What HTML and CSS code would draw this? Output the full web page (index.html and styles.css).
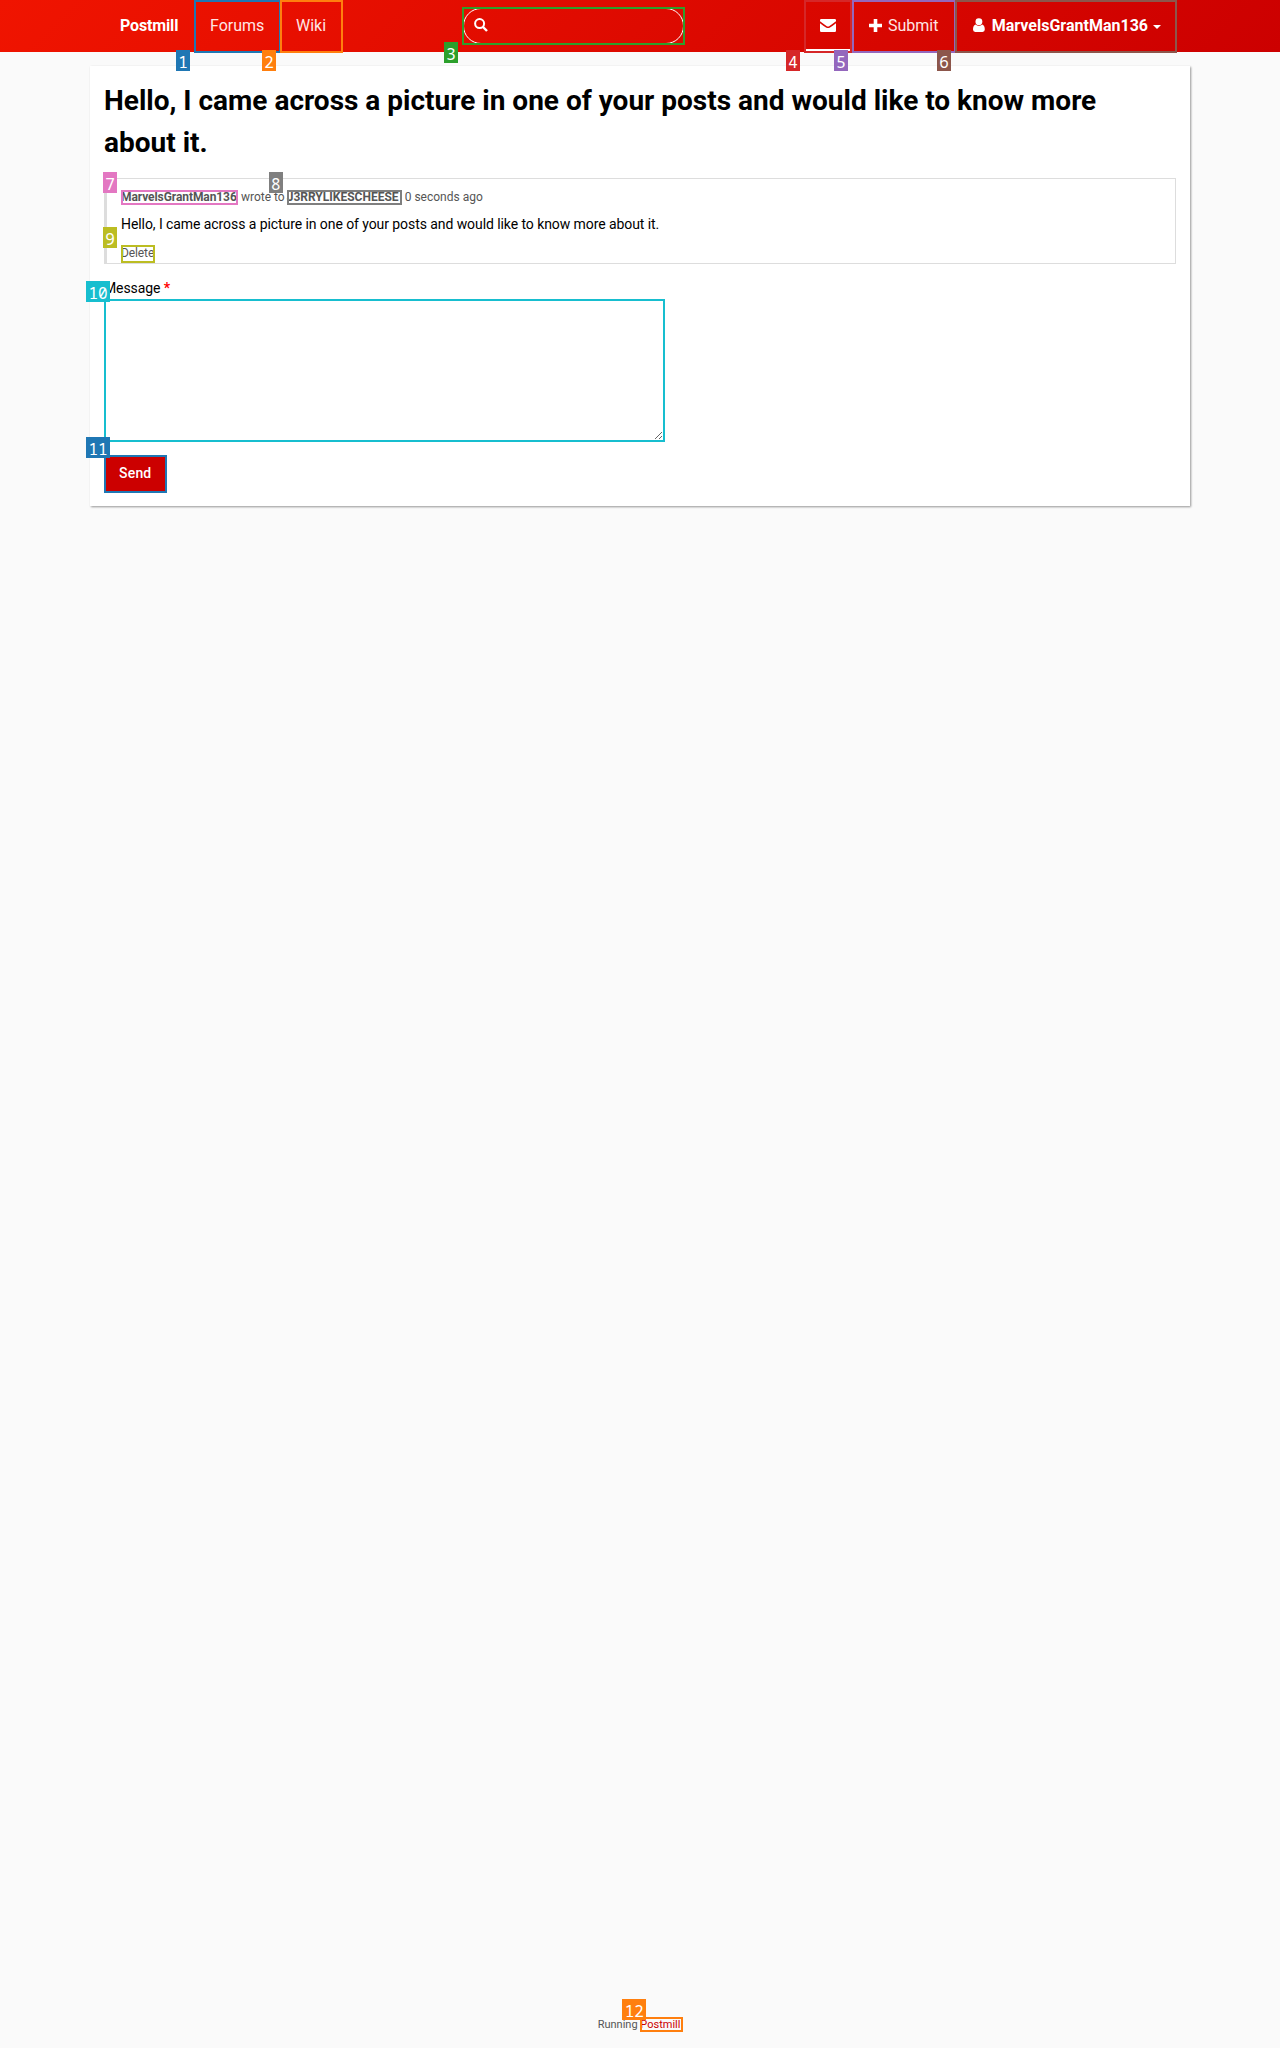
FILE: index.html
```html
<!DOCTYPE html>
<html lang="en">
<head>
<meta charset="utf-8">
<title>Hello, I came across a picture in one of your posts</title>
<link rel="stylesheet" href="styles.css">
</head>
<body>
<header class="site-nav">
  <nav class="nav-inner">
    <a class="nav-item brand">Postmill</a>
    <a class="nav-item mark blue w-forums">Forums<span class="tag below">1</span></a>
    <a class="nav-item mark orange w-wiki">Wiki<span class="tag below">2</span></a>
    <div class="search mark green">
      <div class="search-field"><svg width="14" height="14" viewBox="0 0 14 14"><circle cx="5.6" cy="5.6" r="4.5" fill="none" stroke="#fff" stroke-width="2"/><path d="M9 9l4 4" stroke="#fff" stroke-width="2.4"/></svg></div>
      <span class="tag below">3</span>
    </div>
    <a class="nav-item mail mark red"><svg width="16" height="13" viewBox="0 0 16 13"><path d="M0 1.2Q0 0 1.2 0h13.6Q16 0 16 1.2v1Q12 5.200 9.500 7 8 8 6.500 7 4 5.200 0 2.200zM0 4.200Q3.500 7 6 8.500q2 1 4 0 2.500-1.500 6-4.300v7.600q0 1.200-1.200 1.200H1.200Q0 13 0 11.800z" fill="#fff"/></svg><span class="tag below">4</span></a>
    <a class="nav-item mark purple w-submit"><svg width="13" height="13" viewBox="0 0 13 13"><path d="M6.500 1.500v10M1.500 6.500h10" stroke="#fff" stroke-width="3.600" stroke-linecap="square"/></svg><span class="submit-text">Submit</span><span class="tag below">5</span></a>
    <a class="nav-item user mark brown"><svg width="12" height="14" viewBox="0 0 12 14"><circle cx="6" cy="3.700" r="3.500" fill="#fff"/><path d="M2.500 6.500Q6 9.500 9.500 6.500 12 7.500 12 11.500 12 14 9.700 14H2.300Q0 14 0 11.500 0 7.500 2.500 6.500z" fill="#fff"/></svg><b class="username">MarvelsGrantMan136</b><i class="caret"></i><span class="tag below">6</span></a>
  </nav>
</header>
<main class="card">
  <h1 class="title">Hello, I came across a picture in one of your posts and would like to know more about it.</h1>
  <article class="message">
    <p class="meta"><span class="inline-mark pink w-from"><b>MarvelsGrantMan136</b><span class="tag">7</span></span> wrote to <span class="inline-mark gray w-to"><b>J3RRYLIKESCHEESE</b><span class="tag">8</span></span> 0 seconds ago</p>
    <p class="text">Hello, I came across a picture in one of your posts and would like to know more about it.</p>
    <p class="actions"><span class="inline-mark olive delete">Delete<span class="tag">9</span></span></p>
  </article>
  <form class="reply">
    <label class="label" for="body">Message <b class="required">*</b></label>
    <div class="field mark cyan"><textarea id="body" class="body"></textarea><span class="tag">10</span></div>
    <div class="send mark blue">Send<span class="tag">11</span></div>
  </form>
</main>
<footer class="footer">Running <span class="inline-mark orange footer-link">Postmill<span class="tag">12</span></span></footer>
</body>
</html>
```
FILE: styles.css
```css
* { box-sizing: border-box; }
body {
  margin: 0;
  height: 2048px;
  display: flex;
  flex-direction: column;
  background: #fafafa;
  font: 14px/21px Roboto, sans-serif;
  color: #000;
}
p, h1 { margin: 0; }
.site-nav {
  height: 52px;
  background: linear-gradient(135deg, #f01400, #c00);
}
.nav-inner {
  width: 1072px;
  height: 53px;
  margin: 0 auto;
  display: flex;
}
.nav-inner > * { flex-shrink: 0; }
.nav-item {
  height: 53px;
  padding: 0 16px 3px;
  display: flex;
  align-items: center;
  font-size: 16px;
  color: #ffe5e5;
}
.brand { width: 90px; font-weight: 700; color: #fff; letter-spacing: -.15px; }
.w-forums { width: 87px; }
.w-wiki { width: 63px; margin-left: -1px; }

/* numbered outlines */
.mark, .inline-mark { position: relative; }
.mark::after, .inline-mark::after {
  content: "";
  position: absolute;
  inset: 0;
  border: 2px solid var(--c);
  pointer-events: none;
}
.tag {
  position: absolute;
  z-index: 2;
  left: -18px;
  top: -18px;
  height: 21px;
  padding: 3px 2px 0;
  min-width: 14px;
  background: var(--c);
  color: #fff;
  font: 400 16px/19px "Noto Sans Mono", "Liberation Mono", monospace;
  letter-spacing: 0;
  text-align: center;
}
.field .tag, .send .tag, .footer .tag { width: 24px; }
.tag.below { top: auto; bottom: -18px; }
.blue { --c: #1f77b4; }
.orange { --c: #ff7f0e; }
.green { --c: #2ca02c; }
.red { --c: #d62728; }
.purple { --c: #9467bd; }
.brown { --c: #8c564b; }
.pink { --c: #e377c2; }
.gray { --c: #7f7f7f; }
.olive { --c: #bcbd22; }
.cyan { --c: #17becf; }

.search { width: 223px; height: 38px; margin: 7px 119px 0; }
.search-field {
  height: 36px;
  margin: 1px;
  border: 1px solid #fff;
  border-radius: 18px;
  padding: 9px 10px;
}
.search .tag { bottom: -18px; }
.search-field svg { display: block; }
.mail { width: 48px; box-shadow: inset 0 -4px #fff; }
.w-submit { width: 104px; gap: 6px; padding-left: 17px; }
.user { width: 222px; margin-left: -1px; padding-left: 18px; color: #fff; }
.username { margin-left: 7px; white-space: nowrap; }
.caret { margin: 3px 0 0 5px; border: 4px solid transparent; border-top-color: #fff; border-bottom: 0; }

.card {
  width: 1100px;
  height: 440px;
  margin: 14px auto 0;
  padding: 14px;
  background: #fff;
  box-shadow: 1px 1px 2px rgba(0, 0, 0, .4);
}
.title { padding-right: 20px; font-size: 28px; line-height: 42px; font-weight: 700; }
.message {
  margin-top: 14px;
  height: 86px;
  padding: 8px 14px 0;
  border: 1px solid #ddd;
  border-left-width: 3px;
}
.meta { font-size: 12px; line-height: 21px; color: #555; }
.inline-mark { display: inline-block; line-height: 15px; white-space: nowrap; }
.w-from { width: 117px; letter-spacing: -.08px; }
.w-to { width: 115px; margin-left: -1px; }
.text { margin-top: 6px; letter-spacing: -.075px; }
.actions { display: flex; margin-top: 10px; font-size: 12px; color: #555; }
.delete { width: 34px; height: 18px; line-height: 16px; letter-spacing: -.1px; }
.reply { display: flex; flex-direction: column; align-items: flex-start; }
.label { margin-top: 14px; letter-spacing: -.1px; }
.required { color: #f00; }
.field { width: 561px; height: 143px; }
.body { display: block; width: 560px; height: 142px; border: 1px solid #ccc; background: #fff; resize: vertical; margin: 0; }
.send {
  width: 63px;
  height: 38px;
  margin-top: 13px;
  padding-left: 15px;
  background: #c00;
  color: #fff;
  font-weight: 500;
  line-height: 36px;
  letter-spacing: .2px;
}
.footer {
  margin: auto auto 13px;
  padding-left: 1px;
  font-size: 11px;
  line-height: 21px;
  color: #555;
}
.footer-link { width: 43px; color: #c00; }
```
